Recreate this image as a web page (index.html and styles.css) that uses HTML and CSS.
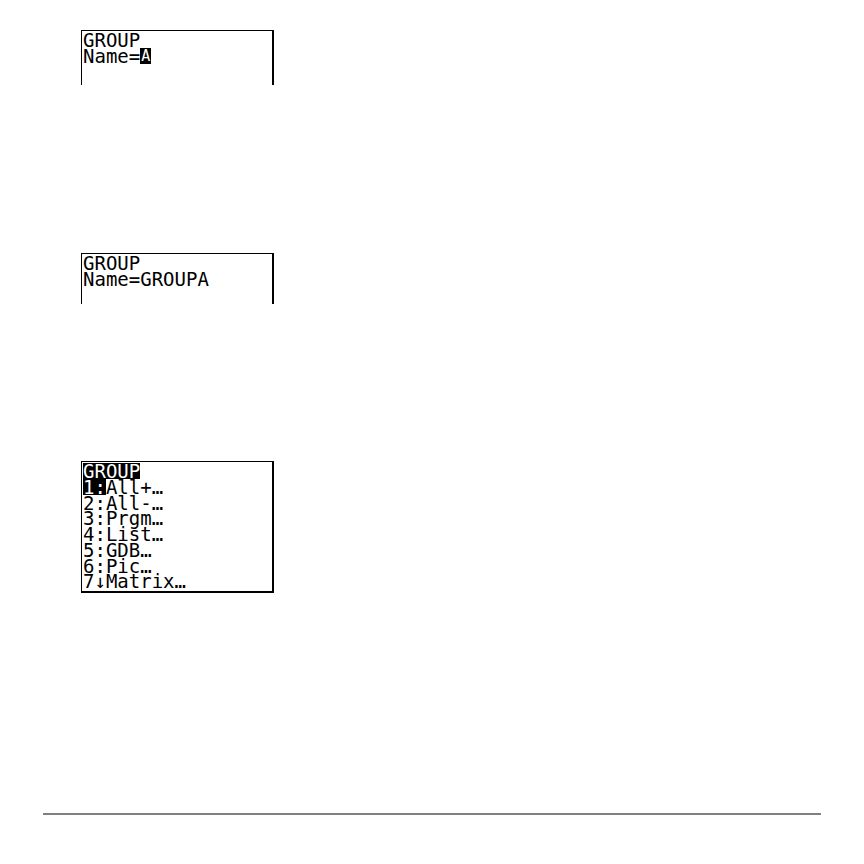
FILE: index.html
```html
<!DOCTYPE html>
<html lang="en">
    <head>
        <title>Grouping variables</title>
        <meta charset="UTF-8">
        <meta name="viewport" content="width=device-width, initial-scale=1.0">
        <link rel="stylesheet" href="styles.css">
    </head>

    <body>
        <main class="steps">
            <!-- name prompt with the alpha cursor -->
            <div class="screen name-prompt">
                <p>GROUP</p>
                <p>Name=<span class="cursor">A</span></p>
            </div>

            <!-- name entered -->
            <div class="screen name-entered">
                <p>GROUP</p>
                <p>Name=GROUPA</p>
            </div>

            <!-- variable type menu -->
            <div class="screen menu">
                <p><span class="inverse">GROUP</span></p>
                <ul>
                    <li><span class="inverse">1:</span>All+…</li>
                    <li>2:All-…</li>
                    <li>3:Prgm…</li>
                    <li>4:List…</li>
                    <li>5:GDB…</li>
                    <li>6:Pic…</li>
                    <li>7↓Matrix…</li>
                </ul>
            </div>
        </main>

        <hr class="page-rule">
    </body>
</html>
```

FILE: styles.css
```css
body{
    background: #fff;
    color: #000;
    margin: 0;
    padding: 30px 43px;
}
p, ul{
    list-style: none;
    margin: 0;
    padding: 0;
}
.steps{
    display: flex;
    flex-direction: column;
    align-items: flex-start;
    padding-left: 38px;
}
.screen{
    border: 1px solid #000;
    border-right-width: 2px;
    box-sizing: border-box;
    font: 19px/16px "DejaVu Sans Mono", "Liberation Mono", monospace;
    min-width: 193px;
    padding: 1px 1px 0;
}
.screen p{
    height: 16px;
}

/* the prompt screens are cut off, so they have no bottom edge */
.name-prompt{
    border-bottom: none;
    margin-bottom: 168px;
    padding-bottom: 21px;
}
.name-entered{
    border-bottom: none;
    margin-bottom: 157px;
    padding-bottom: 17px;
}
.menu{
    border-bottom-width: 2px;
    margin-bottom: 220px;
    padding-bottom: 2px;
}
/* seven rows share the height under the title */
.menu ul{
    display: grid;
    grid-template-rows: repeat(7, minmax(0, 1fr));
    height: 110px;
}
.inverse, .cursor{
    background: #000;
    color: #fff;
    display: inline-block;
    height: 16px;
    vertical-align: top;
}
.cursor{
    font-size: 15px;
    padding: 0 1px;
}
.page-rule{
    background: #808080;
    border: none;
    height: 2px;
    margin: 0;
}
```
